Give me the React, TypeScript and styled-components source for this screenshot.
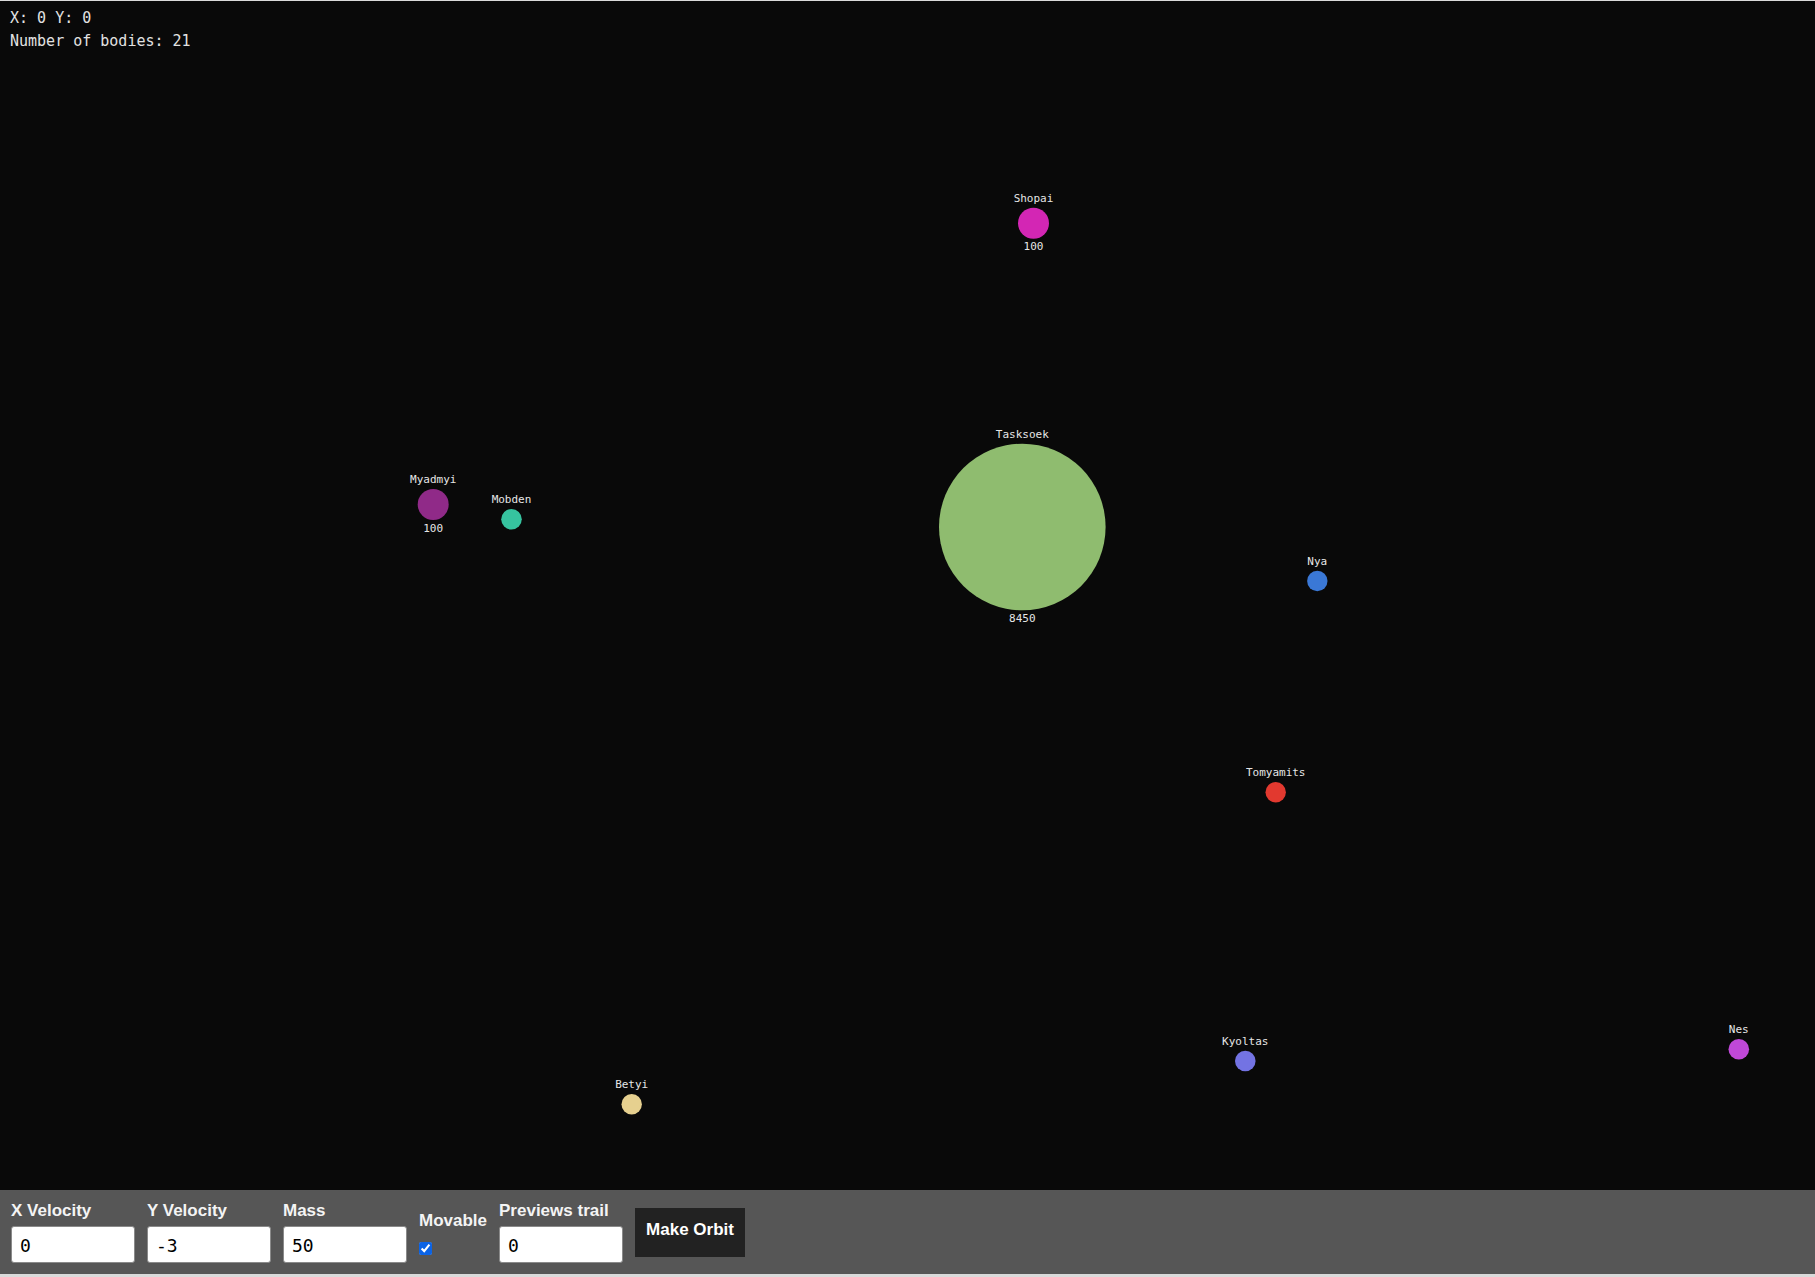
import React, { useState } from "react";
import styled, { createGlobalStyle } from "styled-components";

interface Body {
  name: string;
  x: number;
  y: number;
  r: number;
  color: string;
  mass?: number;
}

// positions are in scene coordinates (scene starts 1px below the page top)
const bodies: Body[] = [
  { name: "Shopai", x: 1033.5, y: 222.3, r: 15.5, color: "#d326b4", mass: 100 },
  { name: "Tasksoek", x: 1022.3, y: 526, r: 83.3, color: "#8fbc6f", mass: 8450 },
  { name: "Myadmyi", x: 433.2, y: 503.5, r: 15.5, color: "#902a88", mass: 100 },
  { name: "Mobden", x: 511.5, y: 518.3, r: 10.3, color: "#36c39f" },
  { name: "Nya", x: 1317.3, y: 580, r: 10.2, color: "#3a78d6" },
  { name: "Tomyamits", x: 1275.7, y: 791.3, r: 10.2, color: "#e2392f" },
  { name: "Kyoltas", x: 1245.3, y: 1060, r: 10.3, color: "#7373e3" },
  { name: "Betyi", x: 631.7, y: 1103.3, r: 10.2, color: "#e6d08f" },
  { name: "Nes", x: 1738.8, y: 1048.3, r: 10.3, color: "#c048d8" },
];

const GlobalStyle = createGlobalStyle`
  html, body {
    margin: 0;
    padding: 0;
    background: #dadada;
  }
  body {
    font-family: "Liberation Sans", Arial, sans-serif;
  }
`;

const Page = styled.div`
  display: flex;
  flex-direction: column;
  width: 1815px;
  height: 1277px;
  padding: 1px 0 3px;
  box-sizing: border-box;
  overflow: hidden;
`;

const Scene = styled.div`
  position: relative;
  flex: 1;
  background: #090909;
`;

const Space = styled.svg`
  display: block;
  width: 100%;
  height: 100%;
`;

const Hud = styled.div`
  position: absolute;
  top: 6px;
  left: 10px;
  font: 15px/23px "DejaVu Sans Mono", monospace;
  color: #e2e2e2;
  white-space: pre;
`;

const BodyText = styled.text`
  font: 11px "DejaVu Sans Mono", monospace;
  fill: #e6e6e6;
  text-anchor: middle;
`;

const Controls = styled.div`
  flex-shrink: 0;
  display: flex;
  align-items: center;
  gap: 12px;
  height: 84px;
  padding-left: 11px;
  box-sizing: border-box;
  background: #565656;
`;

const Field = styled.label`
  display: flex;
  flex-direction: column;
  gap: 6px;
`;

const CheckField = styled(Field)`
  gap: 12px;
  margin-top: 3px;
`;

const FieldLabel = styled.span`
  font-size: 17px;
  font-weight: bold;
  line-height: 18px;
  color: #f4f4f4;
`;

const NumberInput = styled.input`
  width: 124px;
  height: 37px;
  box-sizing: border-box;
  padding: 3px 8px 0;
  border: 1px solid #8a8a8a;
  border-radius: 3px;
  background: #fff;
  color: #000;
  font: 18px "DejaVu Sans Mono", monospace;
  outline: none;
`;

const Check = styled.input`
  width: 13px;
  height: 13px;
  margin: 0;
  accent-color: #0b63e5;
`;

const OrbitButton = styled.button`
  width: 110px;
  height: 49px;
  padding: 0 0 4px;
  border: none;
  background: #222;
  color: #fff;
  font: bold 17px "Liberation Sans", Arial, sans-serif;
  cursor: pointer;
`;

const App: React.FC = () => {
  const [xVel, setXVel] = useState("0");
  const [yVel, setYVel] = useState("-3");
  const [mass, setMass] = useState("50");
  const [movable, setMovable] = useState(true);
  const [trail, setTrail] = useState("0");

  return (
    <Page>
      <GlobalStyle />
      <Scene>
        <Space>
          {bodies.map((b) => (
            <g key={b.name}>
              <BodyText x={b.x} y={b.y - b.r - 6}>
                {b.name}
              </BodyText>
              <circle cx={b.x} cy={b.y} r={b.r} fill={b.color} />
              {b.mass !== undefined && (
                <BodyText x={b.x} y={b.y + b.r + 11.5}>
                  {b.mass}
                </BodyText>
              )}
            </g>
          ))}
        </Space>
        <Hud>
          X: 0 Y: 0{"\n"}Number of bodies: 21
        </Hud>
      </Scene>
      <Controls>
        <Field>
          <FieldLabel>X Velocity</FieldLabel>
          <NumberInput value={xVel} onChange={(e) => setXVel(e.target.value)} />
        </Field>
        <Field>
          <FieldLabel>Y Velocity</FieldLabel>
          <NumberInput value={yVel} onChange={(e) => setYVel(e.target.value)} />
        </Field>
        <Field>
          <FieldLabel>Mass</FieldLabel>
          <NumberInput value={mass} onChange={(e) => setMass(e.target.value)} />
        </Field>
        <CheckField>
          <FieldLabel>Movable</FieldLabel>
          <Check
            type="checkbox"
            checked={movable}
            onChange={(e) => setMovable(e.target.checked)}
          />
        </CheckField>
        <Field>
          <FieldLabel>Previews trail</FieldLabel>
          <NumberInput value={trail} onChange={(e) => setTrail(e.target.value)} />
        </Field>
        <OrbitButton>Make Orbit</OrbitButton>
      </Controls>
    </Page>
  );
};

export default App;
